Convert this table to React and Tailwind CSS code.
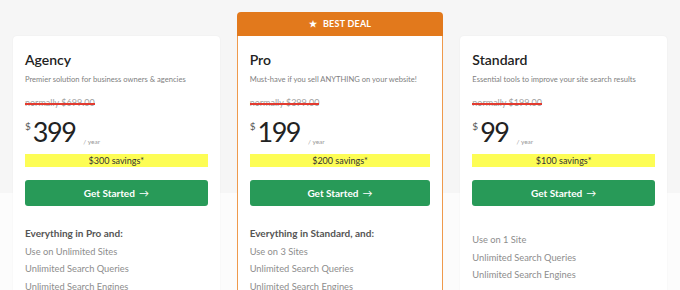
import React from 'react';

const plans = [
    {
        name: 'Agency',
        description: 'Premier solution for business owners & agencies',
        normally: '$699.00',
        price: '399',
        savings: '$300',
        heading: 'Everything in Pro and:',
        features: ['Use on Unlimited Sites', 'Unlimited Search Queries', 'Unlimited Search Engines'],
    },
    {
        name: 'Pro',
        description: 'Must-have if you sell ANYTHING on your website!',
        normally: '$399.00',
        price: '199',
        savings: '$200',
        heading: 'Everything in Standard, and:',
        features: ['Use on 3 Sites', 'Unlimited Search Queries', 'Unlimited Search Engines'],
        featured: true,
    },
    {
        name: 'Standard',
        description: 'Essential tools to improve your site search results',
        normally: '$199.00',
        price: '99',
        savings: '$100',
        heading: null,
        features: ['Use on 1 Site', 'Unlimited Search Queries', 'Unlimited Search Engines'],
    },
];

const PlanCard = ({ plan }) => {
    return (
        <div className="flex flex-col">
            {/* Banner only on featured plan, others get spacer */}
            {plan.featured ? (
                <div className="h-[24px] bg-[#e2791c] rounded-t-[4px] flex items-center justify-center gap-[6px] text-white text-[9px] font-bold tracking-wide">
                    <span className="text-[9px]">★</span>
                    <span>BEST DEAL</span>
                </div>
            ) : (
                <div className="h-[24px]"></div>
            )}
            <div
                className={`flex-1 bg-white px-[12px] pt-[14px] pb-4 ${
                    plan.featured
                        ? 'border border-t-0 border-[#ef9a4c]'
                        : 'rounded-[4px] shadow-[0_0_2px_rgba(0,0,0,0.06)]'
                }`}
            >
                <h3 className="text-[14px] font-semibold text-[#222] leading-[20px]">{plan.name}</h3>
                <p className="text-[7.6px] text-[#7f7f7f] mt-[3px] leading-[12px] whitespace-nowrap">{plan.description}</p>
                <div className="mt-[12px] flex">
                    <span className="relative text-[9px] text-[#a0a0a0] leading-[12px]">
                        normally {plan.normally}
                        {/* red strike line */}
                        <span className="absolute left-0 right-0 top-[6px] h-[1.5px] bg-[#e23b30]"></span>
                    </span>
                </div>
                <div className="flex items-start mt-[9px] h-[30px]">
                    <span className="text-[10px] text-[#555] leading-none mt-[3px] mr-[2px]">$</span>
                    <span className="text-[27px] font-normal text-[#222] leading-[28px] tracking-[-1.5px]">{plan.price}</span>
                    <span className="text-[6.5px] text-[#999] self-end mb-[1px] ml-[8px]">/ year</span>
                </div>
                <div className="mt-[6px] h-[13px] bg-[#fdfd55] flex items-center justify-center text-[9px] text-[#333]">
                    {plan.savings} savings*
                </div>
                <button className="mt-[13px] w-full h-[26px] rounded-[3px] bg-[#289a58] text-white text-[10px] font-bold flex items-center justify-center gap-1">
                    Get Started <span className="font-normal">→</span>
                </button>
                <div className={`${plan.heading ? 'mt-[19px]' : 'mt-[25px]'} flex flex-col`}>
                    {plan.heading && (
                        <div className="text-[10px] font-bold text-[#555] leading-[17.7px]">{plan.heading}</div>
                    )}
                    {plan.features.map((f) => (
                        <div key={f} className="text-[9.3px] text-[#8d8d8d] leading-[17.7px]">{f}</div>
                    ))}
                </div>
            </div>
        </div>
    );
};

const App = () => {
    return (
        <div
            className="w-[680px] h-[290px] overflow-hidden bg-[linear-gradient(to_bottom,#f6f6f6_193px,#fcfcfc_193px)] px-[13px] pt-[12px]"
            style={{ fontFamily: 'Lato, "Noto Sans", sans-serif' }}
        >
            <div className="grid grid-cols-3 gap-[17px]">
                {plans.map((plan) => (
                    <PlanCard key={plan.name} plan={plan} />
                ))}
            </div>
        </div>
    );
};

export default App;
